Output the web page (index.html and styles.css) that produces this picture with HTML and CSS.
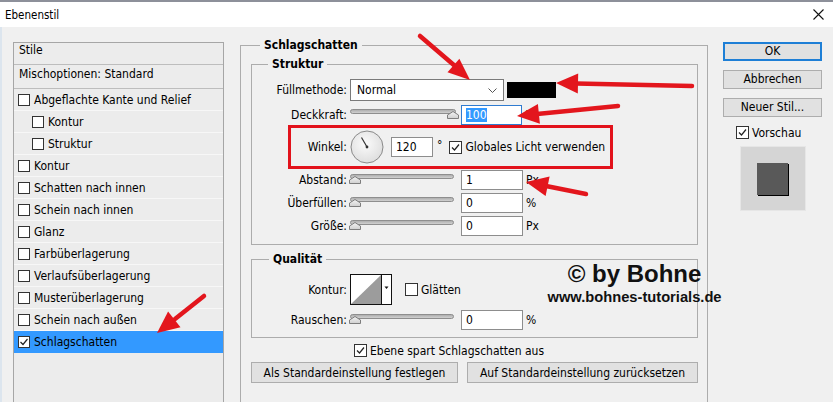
FILE: index.html
```html
<!DOCTYPE html>
<html lang="de">
<head>
<meta charset="utf-8">
<title>Ebenenstil</title>
<link rel="stylesheet" href="styles.css">
</head>
<body>
<svg class="defs" width="0" height="0" aria-hidden="true">
  <defs>
    <linearGradient id="trk" x1="0" y1="0" x2="0" y2="1">
      <stop offset="0" stop-color="#a9a9a9"/>
      <stop offset="1" stop-color="#d6d6d6"/>
    </linearGradient>
    <linearGradient id="thm" x1="0" y1="0" x2="0" y2="1">
      <stop offset="0" stop-color="#f4f4f4"/>
      <stop offset="1" stop-color="#cfcfcf"/>
    </linearGradient>
    <radialGradient id="dialg" cx="0.45" cy="0.4" r="0.65">
      <stop offset="0" stop-color="#fbfbfb"/>
      <stop offset="1" stop-color="#dcdcdc"/>
    </radialGradient>
  </defs>
</svg>
<div class="win">
  <div class="titlebar">
    <span class="title">Ebenenstil</span>
    <svg class="close" width="11" height="11" viewBox="0 0 11 11"><path d="M0.5 0.5L10.5 10.5M10.5 0.5L0.5 10.5" stroke="#111" stroke-width="1.1"/></svg>
  </div>
  <div class="content">
    <div class="styles">
      <div class="hdr">Stile</div>
      <div class="hdr hdr2">Mischoptionen: Standard</div>
      <div class="item"><span class="cb"></span>Abgeflachte Kante und Relief</div>
      <div class="item sub"><span class="cb"></span>Kontur</div>
      <div class="item sub"><span class="cb"></span>Struktur</div>
      <div class="item"><span class="cb"></span>Kontur</div>
      <div class="item"><span class="cb"></span>Schatten nach innen</div>
      <div class="item"><span class="cb"></span>Schein nach innen</div>
      <div class="item"><span class="cb"></span>Glanz</div>
      <div class="item"><span class="cb"></span>Farbüberlagerung</div>
      <div class="item"><span class="cb"></span>Verlaufsüberlagerung</div>
      <div class="item"><span class="cb"></span>Musterüberlagerung</div>
      <div class="item"><span class="cb"></span>Schein nach außen</div>
      <div class="item sel"><span class="cb"><svg width="10" height="10" viewBox="0 0 10 10"><path d="M1.5 5L4 7.5L8.5 2" fill="none" stroke="#222" stroke-width="1.2"/></svg></span>Schlagschatten</div>
    </div>

    <div class="main">
      <fieldset class="grp outer">
        <legend>Schlagschatten</legend>
        <div class="outer-in">
          <fieldset class="grp struktur">
            <legend>Struktur</legend>
            <div class="row r-mode">
              <span class="lbl">Füllmethode:</span>
              <div class="select"><span>Normal</span><svg width="9" height="5" viewBox="0 0 9 5"><path d="M0.5 0.5L4.5 4.5L8.5 0.5" fill="none" stroke="#555"/></svg></div>
              <span class="swatch"></span>
            </div>
            <div class="row r-opacity">
              <span class="lbl">Deckkraft:</span>
              <svg class="slider" width="112" height="20" viewBox="0 0 112 20"><rect x="2.5" y="4.5" width="105" height="4" rx="2" fill="url(#trk)" stroke="#8e8e8e"/><path d="M105 6.5L110.5 10V13.5H99.5V10Z" fill="url(#thm)" stroke="#7d7d7d"/></svg>
              <div class="field focus"><span class="hl">100</span></div>
              <span class="unit">%</span>
            </div>
            <div class="winkel">
              <span class="lbl lbl-w">Winkel:</span>
              <svg class="dial" width="34" height="34" viewBox="0 0 34 34"><circle cx="17" cy="17" r="16" fill="url(#dialg)" stroke="#8a8a8a"/><path d="M17 17L11.5 7.5" stroke="#333" stroke-width="1.2"/><circle cx="17" cy="17" r="1.4" fill="#333"/></svg>
              <div class="field f-angle">120</div>
              <span class="deg">°</span>
              <span class="cb cb13 cb-gl"><svg width="11" height="11" viewBox="0 0 11 11"><path d="M2 5.5L4.5 8L9 2.5" fill="none" stroke="#222" stroke-width="1.2"/></svg></span>
              <span class="cbtext">Globales Licht verwenden</span>
            </div>
            <div class="row r-dist">
              <span class="lbl">Abstand:</span>
              <svg class="slider" width="112" height="20" viewBox="0 0 112 20"><rect x="2.5" y="4.5" width="103" height="4" rx="2" fill="url(#trk)" stroke="#8e8e8e"/><path d="M7 6.5L12.5 10V13.5H1.5V10Z" fill="url(#thm)" stroke="#7d7d7d"/></svg>
              <div class="field">1</div>
              <span class="unit">Px</span>
            </div>
            <div class="row r-next">
              <span class="lbl">Überfüllen:</span>
              <svg class="slider" width="112" height="20" viewBox="0 0 112 20"><rect x="2.5" y="4.5" width="103" height="4" rx="2" fill="url(#trk)" stroke="#8e8e8e"/><path d="M7 6.5L12.5 10V13.5H1.5V10Z" fill="url(#thm)" stroke="#7d7d7d"/></svg>
              <div class="field">0</div>
              <span class="unit">%</span>
            </div>
            <div class="row r-next">
              <span class="lbl">Größe:</span>
              <svg class="slider" width="112" height="20" viewBox="0 0 112 20"><rect x="2.5" y="4.5" width="103" height="4" rx="2" fill="url(#trk)" stroke="#8e8e8e"/><path d="M7 6.5L12.5 10V13.5H1.5V10Z" fill="url(#thm)" stroke="#7d7d7d"/></svg>
              <div class="field">0</div>
              <span class="unit">Px</span>
            </div>
          </fieldset>

          <fieldset class="grp qual">
            <legend>Qualität</legend>
            <div class="row r-kontur">
              <span class="lbl">Kontur:</span>
              <svg class="contour" width="42" height="31" viewBox="0 0 42 31"><rect x="0.5" y="0.5" width="41" height="30" fill="#fff" stroke="#111"/><path d="M1 30L31 1V30Z" fill="#9c9c9c"/><path d="M31.5 0.5V30.5" stroke="#111"/><path d="M34.5 12.5H38.5L36.5 15Z" fill="#111"/></svg>
              <span class="cb cb13 cb-gl2"></span>
              <span class="cbtext">Glätten</span>
            </div>
            <div class="row r-noise">
              <span class="lbl">Rauschen:</span>
              <svg class="slider" width="112" height="20" viewBox="0 0 112 20"><rect x="2.5" y="4.5" width="103" height="4" rx="2" fill="url(#trk)" stroke="#8e8e8e"/><path d="M7 6.5L12.5 10V13.5H1.5V10Z" fill="url(#thm)" stroke="#7d7d7d"/></svg>
              <div class="field">0</div>
              <span class="unit">%</span>
            </div>
          </fieldset>

          <div class="knock"><span class="cb cb13"><svg width="11" height="11" viewBox="0 0 11 11"><path d="M2 5.5L4.5 8L9 2.5" fill="none" stroke="#222" stroke-width="1.2"/></svg></span><span class="cbtext">Ebene spart Schlagschatten aus</span></div>
          <div class="btnrow">
            <button class="btn b-set">Als Standardeinstellung festlegen</button>
            <button class="btn b-reset">Auf Standardeinstellung zurücksetzen</button>
          </div>
        </div>
      </fieldset>
    </div>

    <div class="side">
      <button class="btn sbtn ok">OK</button>
      <button class="btn sbtn">Abbrechen</button>
      <button class="btn sbtn">Neuer Stil...</button>
      <div class="vcheck"><span class="cb cb13"><svg width="11" height="11" viewBox="0 0 11 11"><path d="M2 5.5L4.5 8L9 2.5" fill="none" stroke="#222" stroke-width="1.2"/></svg></span><span class="cbtext">Vorschau</span></div>
      <div class="preview"><div class="sq"></div></div>
    </div>
  </div>

  <div class="watermark">
    <div class="wm1">© by Bohne</div>
    <div class="wm2">www.bohnes-tutorials.de</div>
  </div>

  <svg class="overlay" width="833" height="402" viewBox="0 0 833 402">
    <g stroke="#e3161d" stroke-width="4.5" stroke-linecap="round" fill="none">
      <path d="M420 36L455 66"/>
      <path d="M692 86L576 83.5"/>
      <path d="M618 106L537 114"/>
      <path d="M586 194L546 186"/>
      <path d="M204 296L175 319"/>
    </g>
    <g fill="#e3161d">
      <polygon points="470,80 447.5,72.3 459.4,58.7"/>
      <polygon points="556,83 578.2,73.5 577.8,93.5"/>
      <polygon points="517,116 537.9,103.9 539.9,123.8"/>
      <polygon points="526,182 549.6,176.5 545.6,196.1"/>
      <polygon points="157,333 168.1,311.5 180.5,327.3"/>
    </g>
  </svg>
</div>
</body>
</html>
```

FILE: styles.css
```css
* { box-sizing: border-box; }

html, body { margin: 0; padding: 0; }

body {
  width: 833px;
  height: 402px;
  overflow: hidden;
  background: #f0f0f0;
  font-family: "DejaVu Sans Condensed", "DejaVu Sans", sans-serif;
  font-size: 12px;
  color: #000;
}

.defs { position: absolute; width: 0; height: 0; }

.win {
  position: relative;
  width: 833px;
  height: 402px;
  overflow: hidden;
}

/* title bar */
.titlebar {
  height: 27px;
  background: #fff;
  border-top: 2px solid #8d909a;
  display: flex;
  align-items: center;
  justify-content: space-between;
  padding: 0 9px 0 5px;
}
.title { font-size: 11.5px; }

.content {
  display: flex;
  align-items: flex-start;
  height: 375px;
  border-left: 2px solid #dce5ee;
}

/* left style list */
.styles {
  margin: 15px 0 0 11px;
  width: 211px;
  height: 380px;
  flex: none;
  border: 1px solid #a6a6a6;
  background: #ececec;
}
.hdr {
  height: 22px;
  padding-left: 5px;
  display: flex;
  align-items: flex-start;
  border-bottom: 1px solid #bdbdbd;
}
.hdr2 { height: 24px; padding-top: 2px; }
.item {
  height: 22px;
  display: flex;
  align-items: center;
  padding-left: 4px;
  border-bottom: 1px solid #f7f7f7;
}
.item.sub { padding-left: 18px; }
.item.sel { background: #3399ff; border-bottom-color: #3399ff; }

.cb {
  width: 12px;
  height: 12px;
  flex: none;
  border: 1px solid #333;
  background: #fff;
  display: inline-flex;
  align-items: center;
  justify-content: center;
  margin-right: 4px;
}
.cb13 { width: 13px; height: 13px; margin-right: 3px; }

/* main group */
.main {
  margin: 11px 0 0 16px;
  width: 468px;
  flex: none;
}
.grp {
  margin: 0;
  padding: 0;
  min-width: 0;
  border: 1px solid #acacac;
}
.grp > legend {
  padding: 0 4px;
  font-weight: bold;
  line-height: 14px;
}
.outer { height: 380px; }
.outer > legend { margin-left: 19px; }
.outer-in { padding: 5px 9px 0 10px; }

.struktur { padding-bottom: 8px; }
.struktur > legend { margin-left: 16px; }
.qual { margin-top: 7px; padding-bottom: 7px; }
.qual > legend { margin-left: 17px; }

.row {
  display: flex;
  align-items: center;
  height: 20px;
}
.lbl {
  width: 95px;
  flex: none;
  text-align: right;
}

.r-mode { margin-top: 8px; height: 22px; }
.select {
  margin-left: 3px;
  width: 154px;
  height: 22px;
  border: 1px solid #7a7a7a;
  background: #fff;
  display: flex;
  align-items: center;
  justify-content: space-between;
  padding: 0 6px 0 6px;
}
.select svg { margin-top: 1px; }
.swatch {
  margin-left: 3px;
  width: 49px;
  height: 16px;
  background: #000;
}

.r-opacity { margin-top: 4px; }
.slider { margin-left: 1px; flex: none; }

.field {
  margin-left: 1px;
  width: 62px;
  height: 20px;
  flex: none;
  border: 1px solid #8d8d8d;
  background: #fff;
  padding-left: 4px;
  display: flex;
  align-items: center;
}
.field.focus { width: 61px; border-color: #2f7bd0; }
.hl { background: #3399ff; color: #fff; }
.unit { margin-left: 3px; }

.winkel {
  margin-left: 36px;
  width: 325px;
  height: 44px;
  border: 3px solid #e2121b;
  display: flex;
  align-items: center;
}
.lbl-w { width: 56px; }
.dial { margin-left: 3px; flex: none; }
.field.f-angle { margin-left: 7px; width: 42px; height: 20px; }
.deg { margin-left: 4px; margin-top: -4px; }
.cb-gl { margin-left: 7px; }

.r-dist { margin-top: 1px; }
.r-next { margin-top: 3px; }

.r-kontur { margin-top: 8px; height: 31px; }
.contour { margin-left: 3px; flex: none; }
.cb-gl2 { margin-left: 13px; }
.r-noise { margin-top: 5px; }

.knock {
  margin-top: 5px;
  height: 15px;
  padding-left: 103px;
  display: flex;
  align-items: center;
}

.btnrow {
  margin-top: 4px;
  display: flex;
}
.btn {
  font-family: inherit;
  font-size: 12px;
  color: #000;
  background: #e1e1e1;
  border: 1px solid #adadad;
  padding: 0;
  height: 21px;
  margin: 0;
}
.b-set { width: 207px; }
.b-reset { width: 231px; margin-left: 9px; }

/* right column */
.side {
  margin: 15px 0 0 15px;
  width: 99px;
  flex: none;
  display: flex;
  flex-direction: column;
}
.sbtn { height: 19px; width: 99px; margin-bottom: 9px; line-height: 15px; }
.sbtn.ok { border: 2px solid #1e7fd6; }
.vcheck {
  margin-top: 0;
  padding-left: 13px;
  height: 13px;
  display: flex;
  align-items: center;
}
.preview {
  margin: 7px 0 0 17px;
  width: 66px;
  height: 65px;
  background: #d5d5d5;
  border: 1px solid #e6e6e6;
  padding: 16px 0 0 16px;
}
.sq {
  width: 31px;
  height: 32px;
  background: #595959;
  box-shadow: 1px 1px 0 #000;
}

/* overlays */
.watermark {
  position: absolute;
  left: 534px;
  top: 262px;
  width: 201px;
  text-align: center;
  font-family: "Liberation Sans", Arial, sans-serif;
  font-weight: bold;
  color: #111;
}
.wm1 { font-size: 24px; line-height: 24px; }
.wm2 { font-size: 14.7px; line-height: 15px; margin-top: 4px; }

.overlay {
  position: absolute;
  left: 0;
  top: 0;
  pointer-events: none;
}
```
